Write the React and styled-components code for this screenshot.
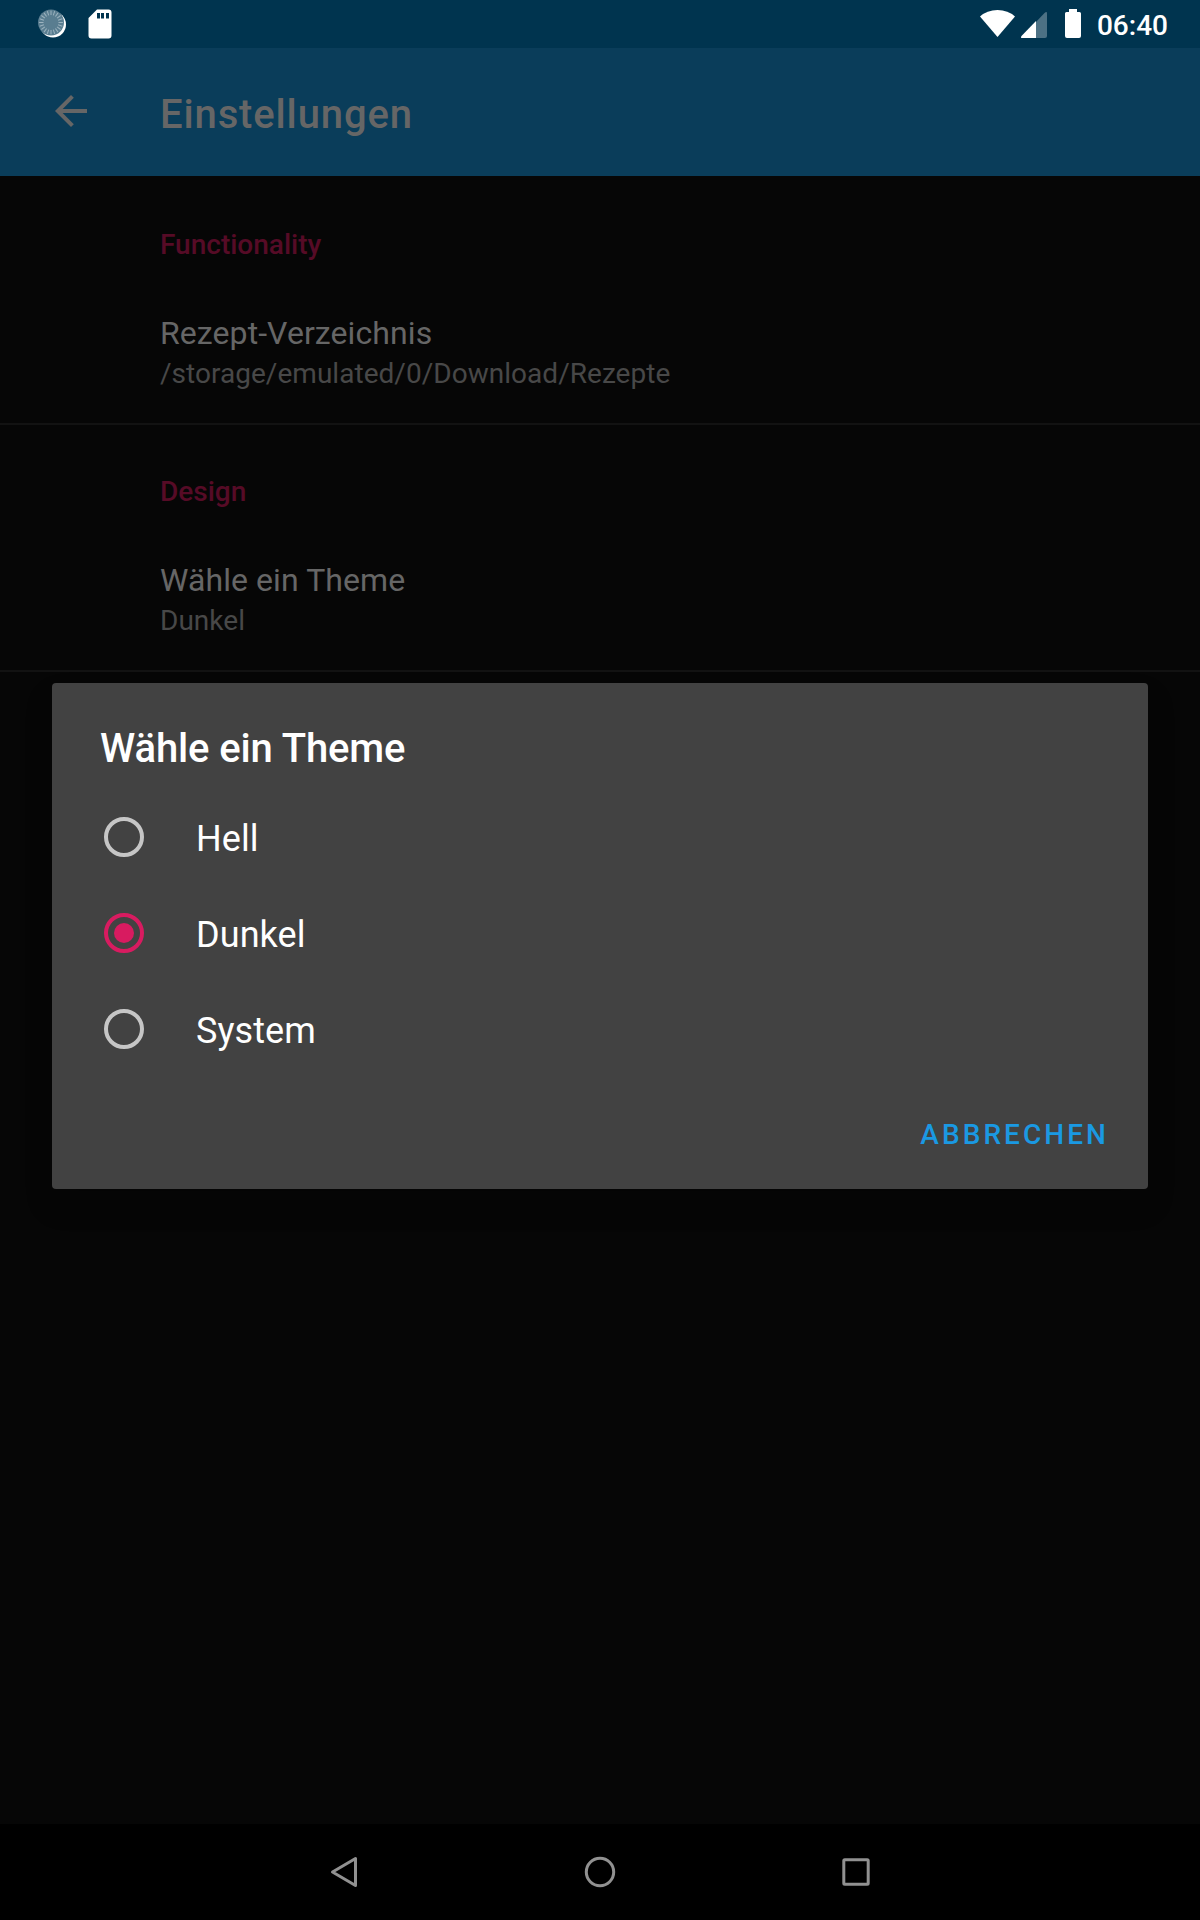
import React, { useState } from "react";
import styled, { createGlobalStyle } from "styled-components";

const GlobalStyle = createGlobalStyle`
  *, *::before, *::after { box-sizing: border-box; }
  html, body { margin: 0; padding: 0; background: #060606; }
  body { font-family: Roboto, "Noto Sans", sans-serif; font-size: 28px; }
  h1, h2, p { margin: 0; }
  svg { display: block; flex: none; }
`;

const Screen = styled.div`
  position: relative;
  display: flex;
  flex-direction: column;
  width: 1200px;
  height: 1920px;
  overflow: hidden;
  background: #060606;
`;

const StatusBar = styled.header`
  display: flex;
  justify-content: space-between;
  height: 48px;
  padding: 0 32px 0 36px;
  background: #00344f;
  color: #fff;
`;

const StatusGroup = styled.div`
  display: flex;
  align-items: center;
`;

const NotificationGroup = styled(StatusGroup)`
  gap: 20px;
`;

const Clock = styled.span`
  margin-left: 11px;
  padding-top: 3px;
  font-size: 28px;
  font-weight: 500;
  line-height: 45px;
`;

const Toolbar = styled.div`
  display: flex;
  align-items: center;
  height: 128px;
  padding-left: 47px;
  background: #0a3d5a;
  color: #666;
`;

const BackButton = styled.button`
  width: 48px;
  height: 48px;
  padding: 0;
  border: 0;
  background: none;
  color: inherit;
  transform: translateY(-1px);
`;

const ToolbarTitle = styled.h1`
  margin-left: 65px;
  padding-top: 6px;
  font-size: 40px;
  font-weight: 500;
  line-height: 48px;
  letter-spacing: 0.86px;
`;

const Preferences = styled.main`
  flex: 1;
  padding-top: 2px;
`;

const Category = styled.section`
  padding: 48px 32px 28px 160px;
  border-bottom: 2px solid #121212;
`;

const CategoryTitle = styled.h2`
  margin-bottom: 50px;
  color: #560b26;
  font-size: 28px;
  font-weight: 500;
  line-height: 38px;
`;

const PreferenceTitle = styled.p`
  color: #666;
  font-size: 32px;
  line-height: 38px;
  letter-spacing: 0.08px;
`;

const PreferenceSummary = styled.p`
  padding-top: 1px;
  color: #484848;
  font-size: 28px;
  line-height: 42px;
  letter-spacing: 0.03px;
`;

const NavBar = styled.nav`
  display: flex;
  justify-content: center;
  align-items: center;
  gap: 208px;
  height: 96px;
  background: #000;
`;

const NavButton = styled.button`
  width: 48px;
  height: 48px;
  padding: 0;
  border: 0;
  background: none;
  color: #919191;
`;

const Dialog = styled.div`
  position: absolute;
  top: 683px;
  left: 52px;
  width: 1096px;
  height: 506px;
  display: flex;
  flex-direction: column;
  border-radius: 4px;
  background: #424242;
  color: #fff;
  box-shadow: 0 16px 28px rgba(0, 0, 0, 0.2);
`;

const DialogTitle = styled.h2`
  padding: 42px 48px 16px;
  font-size: 40px;
  font-weight: 500;
  line-height: 48px;
  letter-spacing: -0.12px;
`;

const Option = styled.button`
  display: flex;
  align-items: center;
  gap: 52px;
  height: 96px;
  padding: 0 52px;
  border: 0;
  background: none;
  color: inherit;
  font: 400 36px/42px Roboto, "Noto Sans", sans-serif;
`;

const OptionLabel = styled.span`
  padding-top: 3px;
  letter-spacing: 0.08px;
`;

const Radio = styled.span`
  display: flex;
  align-items: center;
  justify-content: center;
  width: 40px;
  height: 40px;
  border: 4px solid ${(p) => (p.$checked ? "#d81b60" : "#c6c6c6")};
  border-radius: 50%;

  &::after {
    content: "";
    width: 20px;
    height: 20px;
    border-radius: 50%;
    background: ${(p) => (p.$checked ? "#d81b60" : "transparent")};
  }
`;

const Actions = styled.div`
  display: flex;
  justify-content: flex-end;
  padding: 22px 16px 0 0;
`;

const TextButton = styled.button`
  height: 72px;
  padding: 0 23px 0 16px;
  border: 0;
  background: none;
  color: #1a99e3;
  font: 500 28px/72px Roboto, "Noto Sans", sans-serif;
  letter-spacing: 3.05px;
`;

const ticks = Array.from({ length: 20 }, (_, i) => i * 18);

function SyncIcon() {
  return (
    <svg width="32" height="32" viewBox="0 0 32 32">
      <circle cx="17" cy="16.5" r="13" fill="#fff" />
      <circle cx="15" cy="14.5" r="13" fill="#597d90" />
      <g stroke="#9db3bf" strokeWidth="1">
        {ticks.map((a) => (
          <path key={a} d="M15 2.6V7" transform={`rotate(${a} 15 14.5)`} />
        ))}
      </g>
    </svg>
  );
}

function SdCardIcon() {
  return (
    <svg width="24" height="30" viewBox="0 0 24 30">
      <path
        fill="#fff"
        fillRule="evenodd"
        d="M9 .5H20.5A3 3 0 0 1 23.5 3.500V26.500A3 3 0 0 1 20.500 29.500H3.500A3 3 0 0 1 .5 26.500V9ZM9 4V9.500H12V4ZM13 4V9.500H16V4ZM18 4V9.500H21V4Z"
      />
    </svg>
  );
}

function SignalIcons() {
  return (
    <svg width="106" height="48" viewBox="980 0 106 48">
      <path fill="#fff" d="M980 16.500Q987 10 997.500 10T1015 16.500L997.500 37Z" />
      <path fill="#4d7184" d="M1021 37.800 1044.500 13Q1047 11 1047 13.500V36Q1047 38 1045 38H1021Z" />
      <path fill="#fff" d="M1036 21V38H1022.500Q1020 38 1021.500 36Z" />
      <path
        fill="#fff"
        d="M1069 9H1077V12H1079.500Q1081 12 1081 13.500V36Q1081 38 1079 38H1067Q1065 38 1065 36V13.500Q1065 12 1066.500 12H1069Z"
      />
    </svg>
  );
}

function BackArrow() {
  return (
    <svg width="48" height="48" viewBox="0 0 24 24" fill="currentColor">
      <path d="M20 11H7.830l5.590-5.590L12 4l-8 8 8 8 1.410-1.410L7.830 13H20v-2z" />
    </svg>
  );
}

const categories = [
  {
    title: "Functionality",
    name: "Rezept-Verzeichnis",
    summary: "/storage/emulated/0/Download/Rezepte",
  },
  { title: "Design", name: "Wähle ein Theme", summary: "Dunkel" },
];

const themes = ["Hell", "Dunkel", "System"];

export default function App() {
  const [theme, setTheme] = useState("Dunkel");

  return (
    <>
      <GlobalStyle />
      <Screen>
        <StatusBar>
          <NotificationGroup>
            <SyncIcon />
            <SdCardIcon />
          </NotificationGroup>
          <StatusGroup>
            <SignalIcons />
            <Clock>06:40</Clock>
          </StatusGroup>
        </StatusBar>
        <Toolbar>
          <BackButton aria-label="Zurück">
            <BackArrow />
          </BackButton>
          <ToolbarTitle>Einstellungen</ToolbarTitle>
        </Toolbar>
        <Preferences>
          {categories.map((c) => (
            <Category key={c.title}>
              <CategoryTitle>{c.title}</CategoryTitle>
              <PreferenceTitle>{c.name}</PreferenceTitle>
              <PreferenceSummary>{c.summary}</PreferenceSummary>
            </Category>
          ))}
        </Preferences>
        <NavBar>
          <NavButton>
            <svg width="48" height="48" fill="none" stroke="currentColor" strokeWidth="3" strokeLinejoin="round">
              <path d="M35.500 10.500V37.500L12.500 24Z" />
            </svg>
          </NavButton>
          <NavButton>
            <svg width="48" height="48" fill="none" stroke="currentColor" strokeWidth="3">
              <circle cx="24" cy="24" r="13.700" />
            </svg>
          </NavButton>
          <NavButton>
            <svg width="48" height="48" fill="none" stroke="currentColor" strokeWidth="3">
              <rect x="11.800" y="11.800" width="24.400" height="24.400" rx="1" />
            </svg>
          </NavButton>
        </NavBar>
        <Dialog role="dialog">
          <DialogTitle>Wähle ein Theme</DialogTitle>
          {themes.map((name) => (
            <Option key={name} onClick={() => setTheme(name)}>
              <Radio $checked={name === theme} />
              <OptionLabel>{name}</OptionLabel>
            </Option>
          ))}
          <Actions>
            <TextButton>ABBRECHEN</TextButton>
          </Actions>
        </Dialog>
      </Screen>
    </>
  );
}
